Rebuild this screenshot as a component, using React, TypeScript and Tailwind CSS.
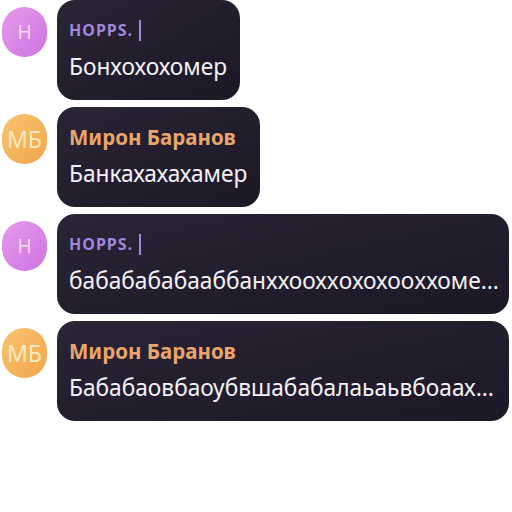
const messages = [
  {
    initials: 'Н',
    name: 'HOPPS.',
    text: 'Бонхохохомер',
    kind: 'hopps',
    wide: false,
  },
  {
    initials: 'МБ',
    name: 'Мирон Баранов',
    text: 'Банкахахахамер',
    kind: 'miron',
    wide: false,
  },
  {
    initials: 'Н',
    name: 'HOPPS.',
    text: 'бабабабабааббанххоохxохохооxхоме...',
    kind: 'hopps',
    wide: true,
  },
  {
    initials: 'МБ',
    name: 'Мирон Баранов',
    text: 'Бабабаовбаоубвшабабалаьаьвбоаах...',
    kind: 'miron',
    wide: true,
  },
];

const Avatar = ({ initials, kind }: { initials: string; kind: string }) => {
  if (kind === 'hopps') {
    return (
      <div className="mt-[7px] w-[45px] h-[50px] shrink-0 rounded-full bg-gradient-to-br from-[#e59ae9] to-[#cf72e3] flex items-center justify-center text-[19px] text-[#f6dcf6]">
        {initials}
      </div>
    );
  }
  return (
    <div className="mt-[7px] w-[45px] h-[50px] shrink-0 rounded-full bg-gradient-to-br from-[#f9c36f] to-[#f1a64a] flex items-center justify-center text-[23px] text-[#fde8c2]">
      {initials}
    </div>
  );
};

const App = () => {
  return (
    <div
      className="w-[512px] h-[512px] bg-white overflow-hidden flex flex-col gap-[7px] pl-[2px]"
      style={{ fontFamily: '"Noto Sans", "Open Sans", sans-serif' }}
    >
      {messages.map((m, i) => (
        <div key={i} className="flex gap-[10px]">
          <Avatar initials={m.initials} kind={m.kind} />
          <div
            className={`h-[100px] rounded-[18px] bg-gradient-to-br from-[#2a2436] to-[#1c1826] pl-[12px] pr-[13px] pt-[18px] flex flex-col ${
              m.wide ? 'w-[452px]' : ''
            }`}
          >
            {m.kind === 'hopps' ? (
              <div className="h-[24px] flex items-center gap-[6px]">
                <span className="text-[16px] font-bold tracking-[1px] text-[#9c88dc]">{m.name}</span>
                <span className="w-[2px] h-[21px] bg-[#9c88dc]" />
              </div>
            ) : (
              <div className="h-[24px] flex items-center">
                <span className="text-[20.5px] font-bold text-[#e9a66c]">{m.name}</span>
              </div>
            )}
            <div className="mt-[10px] h-[30px] flex items-center text-[22.7px] text-[#f4f2f7] whitespace-nowrap">
              {m.text}
            </div>
          </div>
        </div>
      ))}
    </div>
  );
};

export default App;
